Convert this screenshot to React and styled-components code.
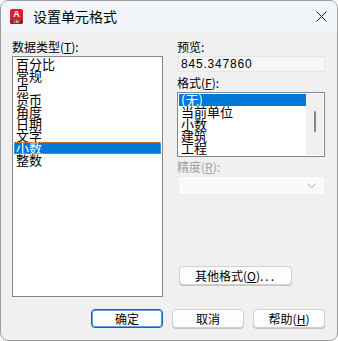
import React from "react";
import styled, { createGlobalStyle } from "styled-components";

const GlobalStyle = createGlobalStyle`
  html, body {
    margin: 0;
    padding: 0;
    background: #ffffff;
  }
  body {
    font-family: "Noto Sans CJK SC", "Liberation Sans", sans-serif;
    font-size: 12px;
    color: #000000;
  }
`;

const Window = styled.div`
  box-sizing: border-box;
  width: 338px;
  height: 341px;
  border: 1px solid #9c9c9c;
  border-radius: 8px;
  overflow: hidden;
  background-color: #f0f0f0;
  display: flex;
  flex-direction: column;
`;

const TitleBar = styled.div`
  height: 30px;
  flex-shrink: 0;
  display: flex;
  align-items: center;
  padding-left: 9px;
  background-color: #f2f5f9;
`;

const AppIcon = styled.div`
  position: relative;
  width: 13px;
  height: 15px;
  border-radius: 2px;
  background-color: #d8202f;
  color: #ffffff;
  font-family: "Liberation Sans", sans-serif;
  font-weight: bold;
  font-size: 9px;
  line-height: 10px;
  text-align: center;
  overflow: hidden;
`;

const IconBand = styled.div`
  position: absolute;
  left: 0;
  right: 0;
  bottom: 0;
  height: 4px;
  background-color: #9c1420;
  font-size: 3px;
  line-height: 4px;
  font-weight: normal;
`;

const Title = styled.div`
  margin-left: 10px;
  font-size: 14px;
  line-height: 16px;
  flex: 1;
`;

const CloseButton = styled.div`
  width: 32px;
  height: 30px;
  display: flex;
  align-items: center;
  justify-content: center;
`;

const Body = styled.div`
  flex: 1;
  display: flex;
  flex-direction: column;
  padding: 9px 12px 0 11px;
`;

const Columns = styled.div`
  display: flex;
  gap: 14px;
`;

const LeftColumn = styled.div`
  width: 151px;
  display: flex;
  flex-direction: column;
`;

const RightColumn = styled.div`
  width: 148px;
  display: flex;
  flex-direction: column;
`;

const Label = styled.div`
  height: 16px;
  line-height: 14px;
  font-size: 12px;
  color: ${(p) => (p.$disabled ? "#a0a0a0" : "#000000")};
  margin-top: ${(p) => p.$top || 0}px;
`;

const Key = styled.span`
  text-decoration: underline;
  text-underline-offset: 1px;
`;

const ListBox = styled.div`
  box-sizing: border-box;
  height: ${(p) => p.$height}px;
  border: 1px solid #828790;
  background-color: #ffffff;
  padding: 1px 1px;
  display: flex;
  overflow: hidden;
`;

const ListItems = styled.div`
  flex: 1;
  display: flex;
  flex-direction: column;
`;

const Item = styled.div`
  box-sizing: border-box;
  height: 12px;
  line-height: 12px;
  font-size: 13px;
  padding-left: 2px;
  white-space: nowrap;
  background-color: ${(p) => (p.$selected ? "#0078d7" : "transparent")};
  color: ${(p) => (p.$selected ? "#ffffff" : "#000000")};
  outline: ${(p) => (p.$focus ? "1px dotted #e8903a" : "none")};
  outline-offset: -1px;
`;

const ScrollTrack = styled.div`
  width: 17px;
  background-color: #f0f0f0;
  display: flex;
  justify-content: center;
  padding-top: 17px;
`;

const ScrollThumb = styled.div`
  width: 2px;
  height: 21px;
  border-radius: 1px;
  background-color: #858585;
`;

const PreviewBox = styled.div`
  box-sizing: border-box;
  height: 16px;
  margin-left: 1px;
  border: 1px solid #e6e6e6;
  background-color: #f6f6f6;
  font-family: "Liberation Sans", sans-serif;
  font-size: 12px;
  letter-spacing: 0.8px;
  line-height: 14px;
  padding-left: 2px;
  color: #000000;
`;

const Select = styled.div`
  box-sizing: border-box;
  height: 19px;
  margin-left: 1px;
  border: 1px solid #ececec;
  background-color: #fafafa;
  display: flex;
  align-items: center;
  justify-content: flex-end;
  padding-right: 8px;
`;

const Spacer = styled.div`
  flex: 1;
`;

const Button = styled.button`
  box-sizing: border-box;
  width: ${(p) => p.$width}px;
  height: 19px;
  margin: 0;
  padding: 0;
  border: 1px solid ${(p) => (p.$primary ? "#0067c0" : "#d0d0d0")};
  border-radius: 4px;
  background-color: #fdfdfd;
  font-family: "Noto Sans CJK SC", "Liberation Sans", sans-serif;
  font-size: 12px;
  line-height: 16px;
  color: #000000;
  box-shadow: ${(p) => (p.$primary ? "inset 0 0 0 1px #5a9de0" : "0 1px 0 #c4c4c4")};
`;

const Dots = styled.span`
  letter-spacing: 2px;
`;

const OtherRow = styled.div`
  display: flex;
  padding-left: 2px;
  margin-bottom: 12px;
`;

const Footer = styled.div`
  display: flex;
  justify-content: flex-end;
  gap: 9px;
  margin-top: 12px;
`;

const dataTypes = ["百分比", "常规", "点", "货币", "角度", "日期", "文字", "小数", "整数"];
const formats = ["(无)", "当前单位", "小数", "建筑", "工程"];

const App = () => {
  return (
    <>
      <GlobalStyle />
      <Window>
        <TitleBar>
          <AppIcon>
            A<IconBand>CAD</IconBand>
          </AppIcon>
          <Title>设置单元格式</Title>
          <CloseButton>
            <svg width="11" height="11" viewBox="0 0 11 11">
              <path d="M0.5 0.5 L10.5 10.5 M10.5 0.5 L0.5 10.5" stroke="#1a1a1a" strokeWidth="1" />
            </svg>
          </CloseButton>
        </TitleBar>
        <Body>
          <Columns>
            <LeftColumn>
              <Label>
                数据类型(<Key>T</Key>):
              </Label>
              <ListBox $height={241}>
                <ListItems>
                  {dataTypes.map((t) => (
                    <Item key={t} $selected={t === "小数"} $focus={t === "小数"}>
                      {t}
                    </Item>
                  ))}
                </ListItems>
              </ListBox>
            </LeftColumn>
            <RightColumn>
              <Label>预览:</Label>
              <PreviewBox>845.347860</PreviewBox>
              <Label $top={4}>
                格式(<Key>F</Key>):
              </Label>
              <ListBox $height={65}>
                <ListItems>
                  {formats.map((f) => (
                    <Item key={f} $selected={f === "(无)"}>
                      {f}
                    </Item>
                  ))}
                </ListItems>
                <ScrollTrack>
                  <ScrollThumb />
                </ScrollTrack>
              </ListBox>
              <Label $top={3} $disabled>
                精度(<Key>R</Key>):
              </Label>
              <Select>
                <svg width="9" height="5" viewBox="0 0 9 5">
                  <path d="M0.5 0.5 L4.5 4.5 L8.5 0.5" fill="none" stroke="#a8a8a8" strokeWidth="1" />
                </svg>
              </Select>
              <Spacer />
              <OtherRow>
                <Button $width={113}>
                  其他格式(<Key>O</Key>)<Dots>...</Dots>
                </Button>
              </OtherRow>
            </RightColumn>
          </Columns>
          <Footer>
            <Button $width={72} $primary>
              确定
            </Button>
            <Button $width={72}>取消</Button>
            <Button $width={72}>
              帮助(<Key>H</Key>)
            </Button>
          </Footer>
        </Body>
      </Window>
    </>
  );
};

export default App;
